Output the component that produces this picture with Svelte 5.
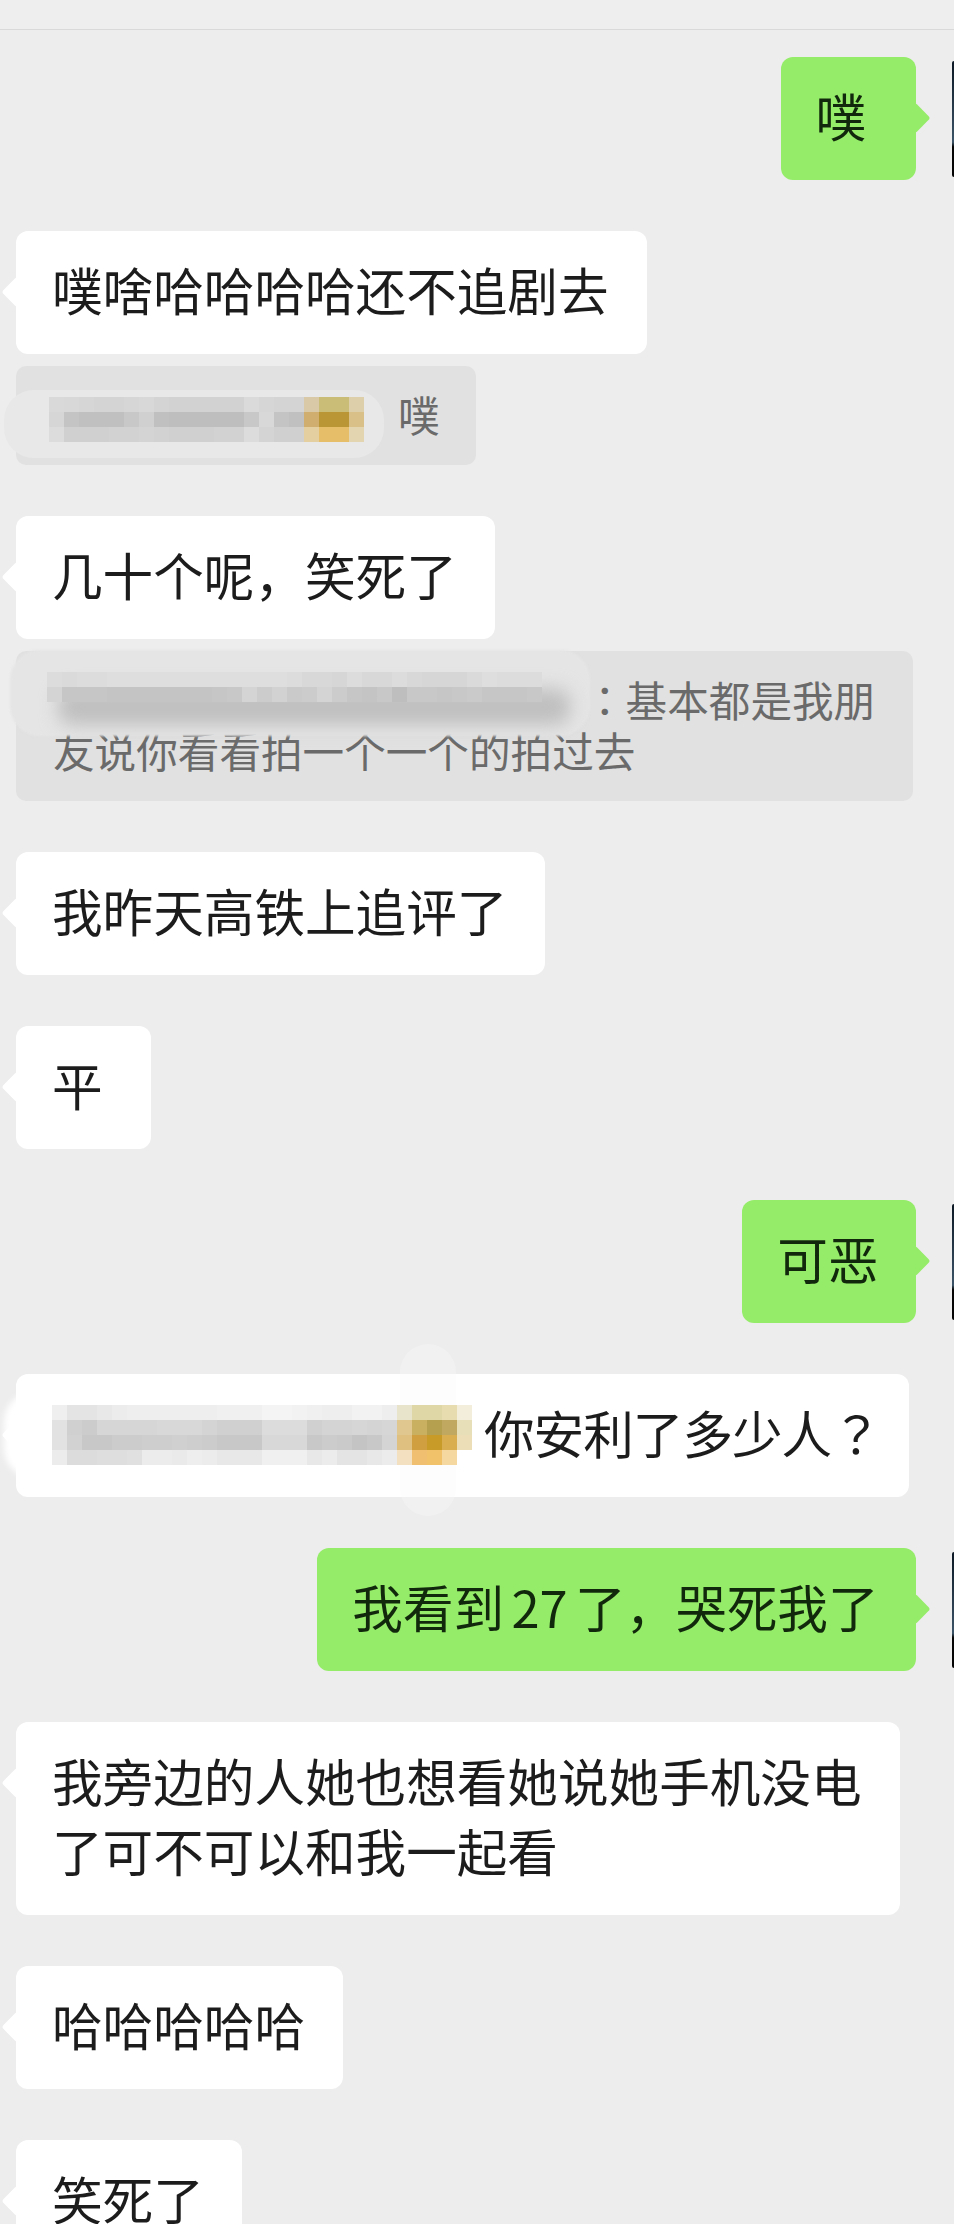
<script>
  // mosaic rows: two chars = grey level, six chars = full colour
  const nameA = [
    "d9 d8 d6 d4 d4 d6 d8 d4 d2 d2 d2 d2 d2 da d6 d4 d4 d9c9a6 c9bd78 c9bd78 dccfaa".split(" "),
    "d6 c4 c0 c0 c0 c8 d0 c0 be be be be be c8 d8 c4 c0 cfae70 ba9635 ba9635 d8c088".split(" "),
    "dc d0 d0 d0 d2 d2 d4 d2 d0 d0 d0 d2 d2 dc d4 d0 d0 e3cfa0 e6bd68 e6bd68 e3d5b0".split(" ")
  ];
  const nameB = [
    "dc da dc dc de de de de de de de de de de de de dc d8 d8 d6 dc d8 d8 dc d8 d6 d6 d6 da de dc dc dc".split(" "),
    "d4 c6 c6 c6 c4 c4 c4 c4 c4 c4 c4 c6 c8 d4 cc d2 ca cc d4 cc c6 c4 c8 be c8 c8 c6 c8 ca c6 c6 c6 c8".split(" ")
  ];
  const nameC = [
    "ef e4 e4 e8 ec ee ee ee ee ee ee f0 f0 f0 f4 f4 f2 f0 ee ee f2 f2 ee e8e4cc dfd7a5 dfd7a5 e6dcb0 f2eedb".split(" "),
    "e2 d0 cc d6 d6 d6 d6 d8 d8 d8 d4 d0 d0 d0 dc dc dc d0 d4 d4 d6 d4 d6 e0c790 c8b060 b5a050 c0a860 e6dfb8".split(" "),
    "e2 d2 c8 c8 cc cc ce ce d0 ce cc c8 c8 c8 d8 d8 d8 c8 cc ca c4 c8 d4 e0c080 d0a040 c89a28 d8ae50 ecdfb8".split(" "),
    "ec dc dc de de e0 ec ec ea ee ec e8 e8 e8 f0 f0 f0 e8 ec e4 e4 e8 ec f3e0c0 f0c070 f2c26a f5d8a0 ffffff".split(" ")
  ];

  const tone = (c) => (c.length === 2 ? "#" + c + c + c : "#" + c);

  const cols = [
    { me: true, text: "噗" },
    { text: "噗啥哈哈哈哈还不追剧去", quote: { kind: "a", text: "噗" } },
    { text: "几十个呢，笑死了", quote: { kind: "b", lead: "：", text: "基本都是我朋友说你看看拍一个一个的拍过去" } },
    { text: "我昨天高铁上追评了" },
    { text: "平" },
    { me: true, text: "可恶" },
    { text: "你安利了多少人", tail: "？", kind: "c" },
    { me: true, text: "我看到 27 了，哭死我了" },
    { text: "我旁边的人她也想看她说她手机没电了可不可以和我一起看" },
    { text: "哈哈哈哈哈" },
    { text: "笑死了" }
  ];
</script>

{#snippet mosaic(rows, cls)}
  <div class="mosaic {cls}">
    {#each rows as row}
      <div class="cells">
        {#each row as c}
          <i style="background: {tone(c)}"></i>
        {/each}
      </div>
    {/each}
  </div>
{/snippet}

<div class="chat">
  <div class="top"></div>
  <div class="list">
    {#each cols as m}
      <div class="msg">
        <div class="row" class:me={m.me}>
          <div class="bubble" class:named={m.kind === "c"}>
            {#if m.kind === "c"}
              <div class="halo halo-c"></div>
              <div class="pill"></div>
              {@render mosaic(nameC, "m-c")}
            {/if}
            {m.text}{#if m.tail}<span class="alt">{m.tail}</span>{/if}
          </div>
          {#if m.me}<div class="avatar"></div>{/if}
        </div>
        {#if m.quote}
          <div class="quote q-{m.quote.kind}">
            {#if m.quote.kind === "a"}
              <div class="halo halo-a"></div>
              {@render mosaic(nameA, "m-a")}
            {:else}
              <div class="halo halo-b"></div>
              <div class="smear"></div>
              {@render mosaic(nameB, "m-b")}
            {/if}
            {#if m.quote.lead}<span class="alt">{m.quote.lead}</span>{/if}{m.quote.text}
          </div>
        {/if}
      </div>
    {/each}
  </div>
</div>

<style>
  :global(body) {
    background: #ededed;
  }
  .chat {
    width: 954px;
    height: 2224px;
    overflow: hidden;
    background: #ededed;
    font-family: "Noto Sans CJK SC", "Liberation Sans", sans-serif;
  }
  .top {
    height: 29px;
    background: #eeeeee;
    border-bottom: 1px solid #d9d9d9;
  }
  .list {
    display: flex;
    flex-direction: column;
    gap: 51px;
    padding: 27px 0 0 16px;
  }
  .row {
    display: flex;
  }
  .row.me {
    justify-content: flex-end;
    align-items: center;
    gap: 36px;
  }
  .bubble {
    position: relative;
    box-sizing: border-box;
    min-width: 135px;
    max-width: 884px;
    padding: 23px 38px 30px 36px;
    background: #fff;
    border-radius: 12px;
    font-size: 50.6px;
    line-height: 70px;
    word-spacing: -4px;
    color: #1c1c1c;
  }
  .bubble::before {
    content: "";
    position: absolute;
    left: -10px;
    top: 50px;
    width: 22px;
    height: 22px;
    background: inherit;
    border-radius: 3px;
    transform: rotate(45deg);
  }
  .me .bubble {
    padding: 23px 37px 30px 35px;
    background: #95ec69;
    color: #12280c;
  }
  .me .bubble::before {
    left: auto;
    right: -10px;
  }
  .bubble.named {
    width: 893px;
    max-width: none;
    padding-right: 0;
    text-indent: 432px;
    letter-spacing: -1px;
  }
  .alt {
    font-family: "Noto Sans CJK TC", sans-serif;
  }
  .avatar {
    width: 2.5px;
    height: 116px;
    border-radius: 3px 0 0 3px;
    background: linear-gradient(#0c1824, #3c5468 70%, #050505 74%);
  }
  .quote {
    position: relative;
    box-sizing: border-box;
    width: fit-content;
    max-width: 897px;
    margin-top: 12px;
    padding: 23px 36px 25px 37px;
    background: #e1e1e1;
    border-radius: 10px;
    font-size: 41.6px;
    line-height: 51px;
    color: #6a6a6a;
  }
  .q-a {
    text-indent: 345px;
  }
  .q-b {
    text-indent: 531px;
  }
  .mosaic {
    position: absolute;
    text-indent: 0;
  }
  .cells {
    display: flex;
  }
  .cells i {
    flex: none;
    width: 15px;
    height: 15px;
  }
  .m-a {
    left: 33px;
    top: 31px;
  }
  .m-b {
    left: 31px;
    top: 21px;
  }
  .m-c {
    left: 36px;
    top: 31px;
  }
  .halo {
    position: absolute;
    border-radius: 30px;
  }
  .halo-a {
    left: -12px;
    top: 24px;
    width: 380px;
    height: 68px;
    background: #e8e8e8;
  }
  .halo-b {
    left: -6px;
    top: -1px;
    width: 580px;
    height: 86px;
    background: #e5e5e5;
    filter: blur(1px);
  }
  .smear {
    position: absolute;
    left: 42px;
    top: 38px;
    width: 512px;
    height: 36px;
    background: #bfbfbf;
    border-radius: 14px;
    filter: blur(9px);
  }
  .halo-c {
    left: -12px;
    top: 18px;
    width: 470px;
    height: 86px;
    background: #fff;
    filter: blur(3px);
  }
  .pill {
    position: absolute;
    left: 384px;
    top: -30px;
    width: 56px;
    height: 172px;
    border-radius: 28px;
    background: rgba(250, 250, 252, 0.35);
  }
</style>
